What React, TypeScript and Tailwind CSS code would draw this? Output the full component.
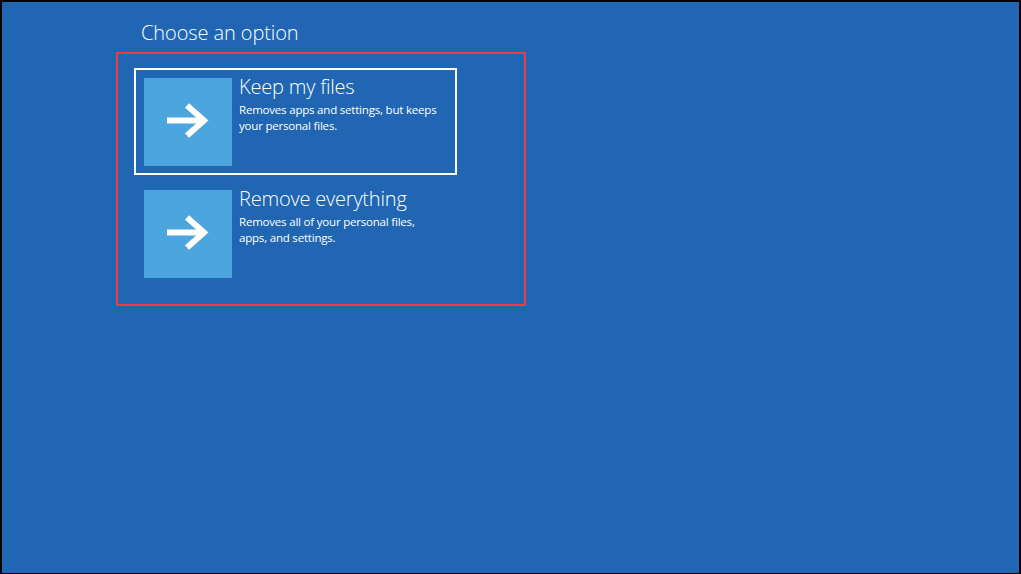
import { ReactNode } from 'react';

const ArrowTile = () => (
  <div className="w-[88px] h-[88px] shrink-0 bg-[#4ca5dd] flex items-center justify-center">
    <svg width="88" height="88" viewBox="0 0 88 88">
      <path d="M23 42.5 H59" stroke="white" strokeWidth="6" fill="none" />
      <path d="M43 27.5 L60 42.5 L43 57.5" stroke="white" strokeWidth="6" fill="none" strokeLinejoin="miter" />
    </svg>
  </div>
);

interface OptionProps {
  title: string;
  children: ReactNode;
  selected?: boolean;
}

const Option = ({ title, children, selected }: OptionProps) => (
  <div
    className={`w-[323px] h-[107px] border-2 p-[8px] flex gap-[7px] ${
      selected ? 'border-white' : 'border-transparent'
    }`}
  >
    <ArrowTile />
    <div className="text-white -mt-[3px]">
      <div className="text-[20px] leading-[24px] font-light tracking-[-0.2px]">{title}</div>
      <div className="text-[11.5px] leading-[16px] tracking-[-0.2px] mt-[3px] w-[201px]">{children}</div>
    </div>
  </div>
);

export default function App() {
  return (
    <div
      className="w-full h-[574px] box-border border-black border-t-2 border-l-2 border-r-2 border-b bg-[#2066b2] text-white"
      style={{ fontFamily: '"Open Sans", "Noto Sans", sans-serif' }}
    >
      <h1 className="ml-[139px] mt-[17px] text-[20px] leading-[28px] font-light tracking-[-0.1px]">Choose an option</h1>
      <div className="ml-[114px] mt-[5px] w-[410px] h-[254px] border-2 border-[#f23c3c] pt-[14px] pl-[16px] flex flex-col gap-[5px]">
        <Option title="Keep my files" selected>
          Removes apps and settings, but keeps your personal files.
        </Option>
        <Option title="Remove everything">
          Removes all of your personal files, apps, and settings.
        </Option>
      </div>
    </div>
  );
}
